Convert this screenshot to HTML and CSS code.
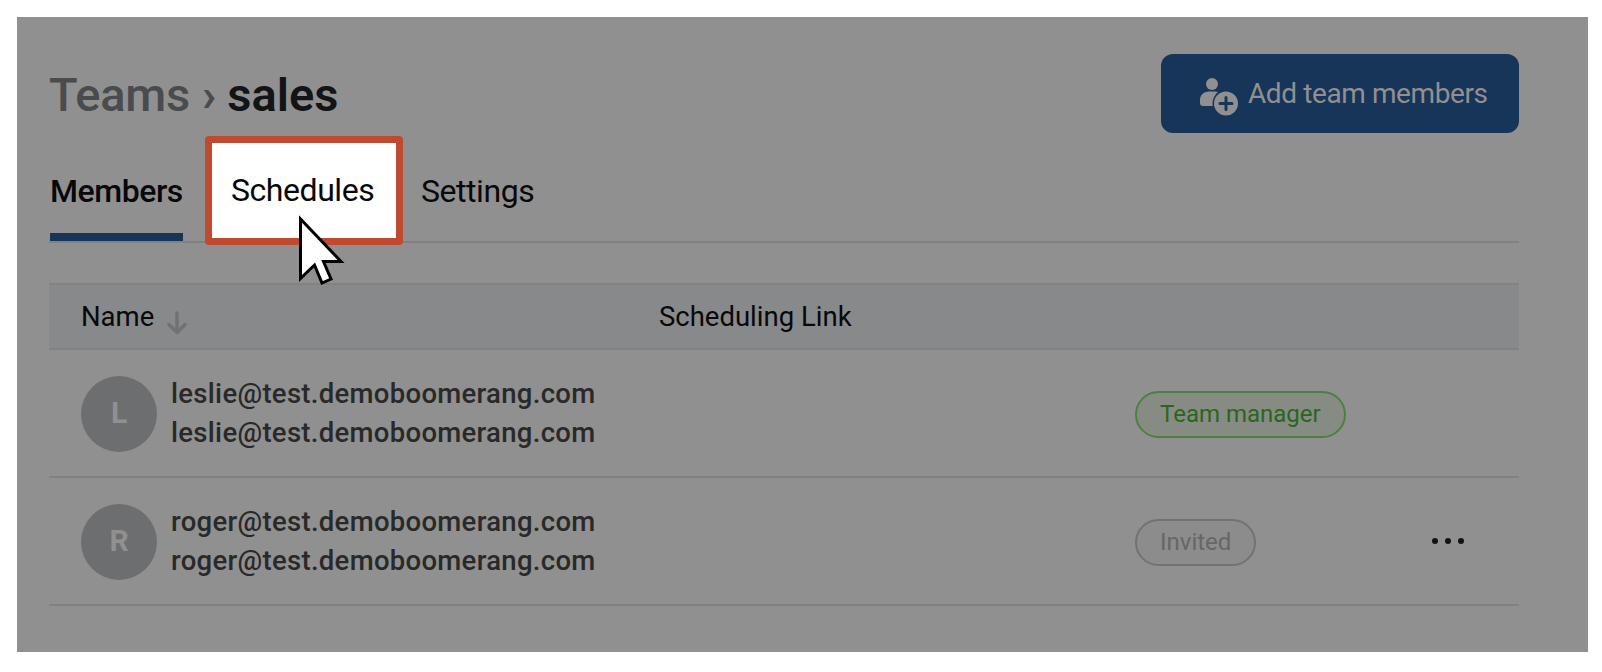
FILE: index.html
```
<!DOCTYPE html>
<html lang="en">
<head>
    <meta charset="UTF-8">
    <meta name="viewport" content="width=device-width, initial-scale=1.0">
    <title>Teams › sales</title>
    <link rel="stylesheet" href="styles.css">
</head>
<body>
    <main class="panel">
        <header class="page-header">
            <h1 class="breadcrumb"><span class="parent">Teams</span><span class="separator">›</span><span class="current">sales</span></h1>
            <button class="add-button">
                <svg class="add-icon" width="40" height="40" viewBox="0 0 40 40">
                    <circle cx="13" cy="7" r="6"/>
                    <path d="M1 26v-3c0-5 4-8.500 9-8.500h6c1 0 2 .2 3 .6-3 2.800-5 6.500-4.400 13.900H4a3 3 0 0 1-3-3z"/>
                    <circle cx="27" cy="26.500" r="12"/>
                    <path class="plus" d="M27 20.500v12M21 26.500h12"/>
                </svg>
                <span class="add-label">Add team members</span>
            </button>
        </header>

        <nav class="tabs">
            <a class="tab active">Members</a>
            <a class="tab highlighted"><span class="tab-label">Schedules</span></a>
            <a class="tab settings">Settings</a>
            <svg class="cursor" width="54" height="76" viewBox="0 0 54 76">
                <path d="M6.500 6V65.500L20.500 52l7.500 18 9-4-7.500-17.500h17.500z"/>
            </svg>
        </nav>

        <section class="members">
            <div class="row head">
                <div class="name">Name
                    <svg class="sort" width="20" height="24" viewBox="0 0 20 24">
                        <path d="M10 2v19M2 13.500l8 8 8-8"/>
                    </svg>
                </div>
                <div class="link">Scheduling Link</div>
            </div>
            <div class="row">
                <div class="person">
                    <span class="avatar">L</span>
                    <div class="emails">
                        <div>leslie@test.demoboomerang.com</div>
                        <div>leslie@test.demoboomerang.com</div>
                    </div>
                </div>
                <div></div>
                <div><span class="badge manager">Team manager</span></div>
                <div></div>
            </div>
            <div class="row">
                <div class="person">
                    <span class="avatar">R</span>
                    <div class="emails">
                        <div>roger@test.demoboomerang.com</div>
                        <div>roger@test.demoboomerang.com</div>
                    </div>
                </div>
                <div></div>
                <div><span class="badge invited">Invited</span></div>
                <div class="menu"><i></i><i></i><i></i></div>
            </div>
        </section>
    </main>
</body>
</html>
```
FILE: styles.css
```
*,
*::before {
    box-sizing: border-box;
}
body {
    margin: 0;
    padding: 17px 14px 20px 17px;
    height: 672px;
    background-color: #fff;
    font-family: Roboto, "Liberation Sans", sans-serif;
    color: #080808;
}
.panel {
    height: 635px;
    padding: 37px 69px 0 33px;
    background-color: #909090;
}
.page-header {
    display: flex;
    justify-content: space-between;
    height: 79px;
}
.breadcrumb {
    display: flex;
    margin: 0 0 0 -1px;
    padding-top: 13px;
    font-size: 47px;
    line-height: 56px;
    font-weight: 500;
    color: #4a4b4c;
}
.parent {
    letter-spacing: -0.2px;
}
.separator {
    margin: 0 11px 0 12px;
    font-weight: 700;
}
.current {
    color: #131415;
    font-weight: 600;
}
.add-button {
    display: flex;
    width: 358px;
    height: 79px;
    padding: 23px 0 0 38px;
    border: none;
    border-radius: 12px;
    background-color: #173459;
    color: #909090;
    font-family: inherit;
    font-size: 28px;
    line-height: 34px;
    letter-spacing: -0.4px;
}
.add-icon {
    flex: none;
    margin-right: 9px;
    fill: #909090;
}
.add-icon circle:last-of-type {
    stroke: #173459;
    stroke-width: 3;
    paint-order: stroke;
}
.add-icon .plus {
    fill: none;
    stroke: #173459;
    stroke-width: 3;
    stroke-linecap: round;
}
.tabs {
    position: relative;
    display: flex;
    height: 110px;
    margin-left: -1px;
    padding-left: 1px;
    border-bottom: 2px solid #818181;
    font-size: 32px;
    line-height: 38px;
    letter-spacing: -0.45px;
}
.tab {
    height: 108px;
    padding-top: 39px;
    white-space: nowrap;
}
.tab.active {
    width: 133px;
    border-bottom: 8px solid #173459;
    font-weight: 500;
}
.tab.highlighted {
    position: relative;
    width: 143px;
    margin: 0 48px 0 47px;
    padding: 38px 0 0 1px;
}
/* spotlight frame sits over the bottom rule */
.tab.highlighted::before {
    content: "";
    position: absolute;
    top: 3px;
    left: -25px;
    width: 198px;
    height: 109px;
    border: 7px solid #be4b30;
    border-radius: 4px;
    background-color: #fff;
}
.tab-label {
    position: relative;
}
.cursor {
    position: absolute;
    top: 80px;
    left: 245px;
    fill: #fff;
    stroke: #000;
    stroke-width: 3;
}
.members {
    margin: 40px 0 0 -1px;
}
.row {
    display: grid;
    grid-template-columns: 578px 475px 298px 1fr;
    align-items: center;
    height: 128px;
    padding: 2px 0 0 32px;
    border-bottom: 2px solid #818181;
}
.row.head {
    height: 67px;
    padding-top: 0;
    border-top: 2px solid #818283;
    background-color: #88898b;
    font-size: 27.5px;
}
.name {
    display: flex;
    align-items: center;
}
.sort {
    margin: 12px 0 0 13px;
    fill: none;
    stroke: #717273;
    stroke-width: 3.5;
    stroke-linecap: round;
    stroke-linejoin: round;
}
.person {
    display: flex;
    align-items: center;
}
.avatar {
    width: 76px;
    height: 76px;
    margin-right: 14px;
    border-radius: 50%;
    background-color: #6d6e70;
    color: #909090;
    font-size: 30px;
    font-weight: 700;
    line-height: 74px;
    text-align: center;
}
.emails {
    padding-bottom: 2px;
    color: #292929;
    font-size: 27.5px;
    font-weight: 500;
    line-height: 39px;
    letter-spacing: 0.3px;
}
.badge {
    display: inline-block;
    height: 47px;
    margin-left: 1px;
    padding: 0 23px;
    border: 2px solid;
    border-radius: 24px;
    font-size: 24px;
    line-height: 43px;
    vertical-align: middle;
}
.manager {
    border-color: #4d8040;
    background-color: #868c84;
    color: #2c651e;
}
.invited {
    border-color: #727272;
    background-color: #8c8c8c;
    color: #666;
}
.menu {
    display: flex;
    gap: 7px;
    padding-bottom: 2px;
}
.menu i {
    width: 6px;
    height: 6px;
    border-radius: 50%;
    background-color: #131313;
}
```
